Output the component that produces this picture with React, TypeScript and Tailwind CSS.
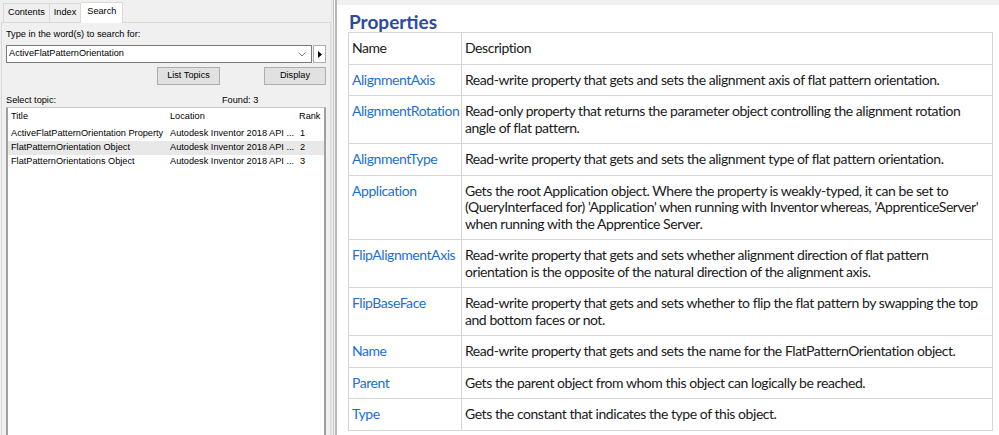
import { Fragment } from 'react';

type Prop = { name: string; lines: string[] };

const props: Prop[] = [
  { name: 'AlignmentAxis', lines: ['Read-write property that gets and sets the alignment axis of flat pattern orientation.'] },
  {
    name: 'AlignmentRotation',
    lines: ['Read-only property that returns the parameter object controlling the alignment rotation', 'angle of flat pattern.'],
  },
  { name: 'AlignmentType', lines: ['Read-write property that gets and sets the alignment type of flat pattern orientation.'] },
  {
    name: 'Application',
    lines: [
      'Gets the root Application object. Where the property is weakly-typed, it can be set to',
      "(QueryInterfaced for) 'Application' when running with Inventor whereas, 'ApprenticeServer'",
      'when running with the Apprentice Server.',
    ],
  },
  {
    name: 'FlipAlignmentAxis',
    lines: ['Read-write property that gets and sets whether alignment direction of flat pattern', 'orientation is the opposite of the natural direction of the alignment axis.'],
  },
  {
    name: 'FlipBaseFace',
    lines: ['Read-write property that gets and sets whether to flip the flat pattern by swapping the top', 'and bottom faces or not.'],
  },
  { name: 'Name', lines: ['Read-write property that gets and sets the name for the FlatPatternOrientation object.'] },
  { name: 'Parent', lines: ['Gets the parent object from whom this object can logically be reached.'] },
  { name: 'Type', lines: ['Gets the constant that indicates the type of this object.'] },
];

const topics = [
  { title: 'ActiveFlatPatternOrientation Property', loc: 'Autodesk Inventor 2018 API ...', rank: '1' },
  { title: 'FlatPatternOrientation Object', loc: 'Autodesk Inventor 2018 API ...', rank: '2' },
  { title: 'FlatPatternOrientations Object', loc: 'Autodesk Inventor 2018 API ...', rank: '3' },
];

function SearchPane() {
  return (
    <div className="w-[331px] shrink-0 h-full bg-[#f0f0f0] flex flex-col text-[9.2px] text-black font-['Liberation_Sans',sans-serif]">
      {/* tabs */}
      <div className="flex items-end pl-[3px] pt-[1px] h-[22px]">
        <div className="h-[19px] px-[4px] flex items-center border border-b-0 border-[#d9d9d9] bg-[#f0f0f0]">Contents</div>
        <div className="h-[19px] px-[4px] flex items-center border border-l-0 border-b-0 border-[#d9d9d9] bg-[#f0f0f0]">Index</div>
        <div className="h-[21px] px-[6px] pb-[2px] flex items-center border border-l-0 border-b-0 border-[#d9d9d9] bg-white relative top-[1px] z-10">Search</div>
      </div>
      <div className="flex-1 ml-[1px] border border-[#d9d9d9] border-b-0 flex flex-col px-[4px] pt-[5px] min-h-0">
        <div className="h-[13px] leading-[13px]">Type in the word(s) to search for:</div>
        <div className="flex mt-[4px] h-[18px] gap-[1px]">
          <div className="flex-1 bg-white border border-[#7a7a7a] flex items-center justify-between pl-[2px] pr-[5px]">
            <span>ActiveFlatPatternOrientation</span>
            <svg width="8" height="5" viewBox="0 0 8 5">
              <path d="M0.5 0.5 L4 4 L7.5 0.5" fill="none" stroke="#7a7a7a" strokeWidth="1" />
            </svg>
          </div>
          <div className="w-[13px] bg-white border border-[#adadad] flex items-center justify-center">
            <svg width="4" height="7" viewBox="0 0 4 7">
              <path d="M0 0 L4 3.5 L0 7 Z" fill="#000" />
            </svg>
          </div>
        </div>
        <div className="flex justify-end mt-[4px] h-[18px]">
          <div className="w-[63px] bg-[#e1e1e1] border border-[#adadad] flex items-center justify-center">List Topics</div>
          <div className="w-[44px]" />
          <div className="w-[62px] bg-[#e1e1e1] border border-[#adadad] flex items-center justify-center">Display</div>
        </div>
        <div className="flex mt-[10px] h-[11px] leading-[11px]">
          <span className="w-[216px]">Select topic:</span>
          <span>Found: 3</span>
        </div>
        <div className="flex-1 mt-[1px] bg-white border-l-2 border-t border-r-2 border-[#a0a0a0] border-t-[#c8c8c8] pt-[2px]">
          <div className="flex h-[14px] items-center pl-[3px]">
            <span className="w-[159px]">Title</span>
            <span className="w-[129px]">Location</span>
            <span>Rank</span>
          </div>
          <div className="mt-[3px]">
            {topics.map((t, i) => (
              <div key={t.title} className={`flex h-[14px] items-center pl-[3px] ${i === 1 ? 'bg-[#e8e8e8]' : ''}`}>
                <span className="w-[159px] whitespace-nowrap">{t.title}</span>
                <span className="w-[130px] whitespace-nowrap">{t.loc}</span>
                <span>{t.rank}</span>
              </div>
            ))}
          </div>
        </div>
      </div>
    </div>
  );
}

function Splitter() {
  return (
    <div className="w-[6px] shrink-0 h-full flex bg-[#f0f0f0]">
      <div className="w-[1px] bg-[#e3e3e3]" />
      <div className="w-[1px]" />
      <div className="w-[1px] bg-[#c4c4c4]" />
      <div className="w-[1px] bg-[#f7f7f7]" />
      <div className="w-[2px] bg-[#b9b9b9]" />
    </div>
  );
}

function PropertiesPane() {
  return (
    <div className="flex-1 min-w-0 h-full bg-white flex flex-col font-['Lato',sans-serif]">
      <div className="h-[5px] bg-[#f0f0f0]" />
      <div className="pl-[11px]">
        <h1 className="text-[19px] leading-[24px] font-bold text-[#2f4a9a] mt-[5px] ml-[1px]">Properties</h1>
        <table className="border-collapse mt-[-2px] w-[645px] text-[14px] leading-[16.5px] tracking-[-0.45px] text-[#1a1a1a]">
          <tbody>
            <tr>
              <td className="w-[113px] border border-[#d6d6d6] pl-[3px] pt-[7px] pb-[7px] align-top">Name</td>
              <td className="border border-[#d6d6d6] pl-[3px] pt-[7px] pb-[7px] align-top">Description</td>
            </tr>
            {props.map((p) => (
              <tr key={p.name}>
                <td className="border border-[#d6d6d6] pl-[3px] pt-[7px] pb-[7px] align-top text-[#1b6fd6] whitespace-nowrap">{p.name}</td>
                <td className="border border-[#d6d6d6] pl-[3px] pt-[7px] pb-[7px] align-top whitespace-nowrap">
                  {p.lines.map((l, i) => (
                    <Fragment key={i}>
                      {i > 0 && <br />}
                      {l}
                    </Fragment>
                  ))}
                </td>
              </tr>
            ))}
          </tbody>
        </table>
      </div>
    </div>
  );
}

export default function App() {
  return (
    <div className="w-[999px] h-[435px] flex overflow-hidden bg-white">
      <SearchPane />
      <Splitter />
      <PropertiesPane />
    </div>
  );
}
